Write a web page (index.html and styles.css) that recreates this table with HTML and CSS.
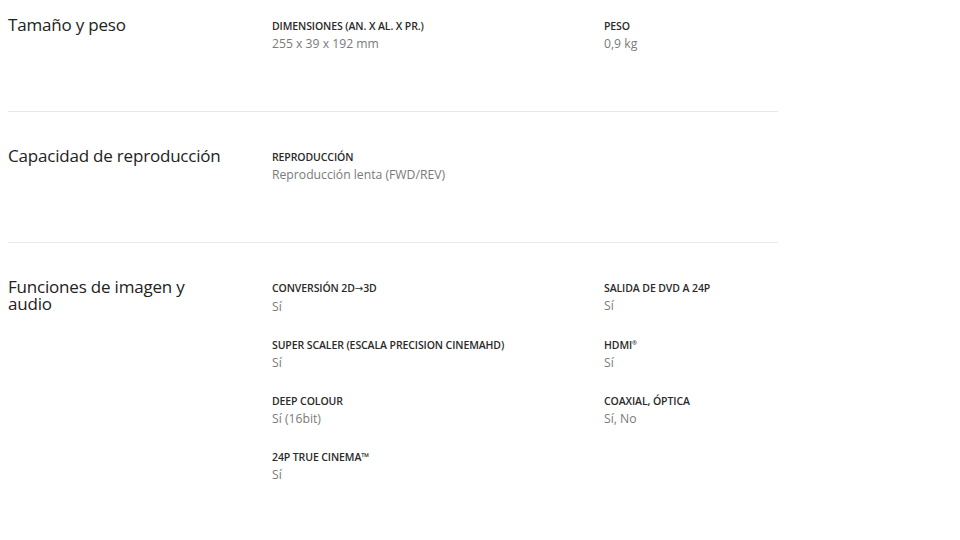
FILE: index.html
```html
<!DOCTYPE html>
<html>

<head>
    <title>Especificaciones</title>
    <link rel="stylesheet" href="styles.css">
</head>

<body>
    <div class="specs">
        <div class="spec-section first">
            <h3 class="spec-title">Tamaño y peso</h3>
            <div class="spec-items">
                <div class="spec-item">
                    <div class="spec-label">Dimensiones (an. x al. x pr.)</div>
                    <div class="spec-value">255 x 39 x 192 mm</div>
                </div>
                <div class="spec-item">
                    <div class="spec-label">Peso</div>
                    <div class="spec-value">0,9 kg</div>
                </div>
            </div>
        </div>

        <div class="spec-section">
            <h3 class="spec-title">Capacidad de reproducción</h3>
            <div class="spec-items">
                <div class="spec-item">
                    <div class="spec-label">Reproducción</div>
                    <div class="spec-value">Reproducción lenta (FWD/REV)</div>
                </div>
            </div>
        </div>

        <div class="spec-section last">
            <h3 class="spec-title">Funciones de imagen y audio</h3>
            <div class="spec-items">
                <div class="spec-item">
                    <div class="spec-label">Conversión 2D<span class="arrow">→</span>3D</div>
                    <div class="spec-value">Sí</div>
                </div>
                <div class="spec-item">
                    <div class="spec-label">Salida de DVD a 24p</div>
                    <div class="spec-value">Sí</div>
                </div>
                <div class="spec-item">
                    <div class="spec-label">Super Scaler (Escala Precision CinemaHD)</div>
                    <div class="spec-value">Sí</div>
                </div>
                <div class="spec-item">
                    <div class="spec-label">HDMI<sup>®</sup></div>
                    <div class="spec-value">Sí</div>
                </div>
                <div class="spec-item">
                    <div class="spec-label">Deep Colour</div>
                    <div class="spec-value">Sí (16bit)</div>
                </div>
                <div class="spec-item">
                    <div class="spec-label">Coaxial, Óptica</div>
                    <div class="spec-value">Sí, No</div>
                </div>
                <div class="spec-item">
                    <div class="spec-label">24p True Cinema™</div>
                    <div class="spec-value">Sí</div>
                </div>
            </div>
        </div>
    </div>
</body>

</html>
```

FILE: styles.css
```css
/* General Styles */
body {
    margin: 0;
    background-color: #fff;
    font-family: "Open Sans", "Noto Sans", sans-serif;
    color: #222;
}

.specs {
    width: 770px;
    padding-left: 8px;
}

/* Section */
.spec-section {
    display: grid;
    grid-template-columns: 264px 1fr;
    padding: 35px 0 57px;
    border-bottom: 1px solid #e8e8e8;
}

.spec-section.first {
    padding-top: 16px;
    padding-bottom: 57px;
}

.spec-section.last {
    border-bottom: none;
}

.spec-title {
    margin: 0;
    max-width: 222px;
    font-size: 17px;
    font-weight: 400;
    line-height: 17px;
    color: #222;
    letter-spacing: -0.2px;
}

.spec-items {
    display: grid;
    grid-template-columns: 332px 1fr;
    row-gap: 18px;
}

.spec-label {
    margin-top: 3px;
    font-size: 10.5px;
    font-weight: 600;
    line-height: 14px;
    text-transform: uppercase;
    color: #2a2a2a;
    letter-spacing: -0.1px;
}

.spec-label .arrow {
    font-family: "DejaVu Sans", sans-serif;
    font-weight: 400;
    font-size: 10px;
}

.spec-label sup {
    font-size: 6px;
    line-height: 0;
}

.spec-value {
    margin-top: 1px;
    font-size: 12.2px;
    line-height: 20px;
    color: #7a7a7a;
}
```
